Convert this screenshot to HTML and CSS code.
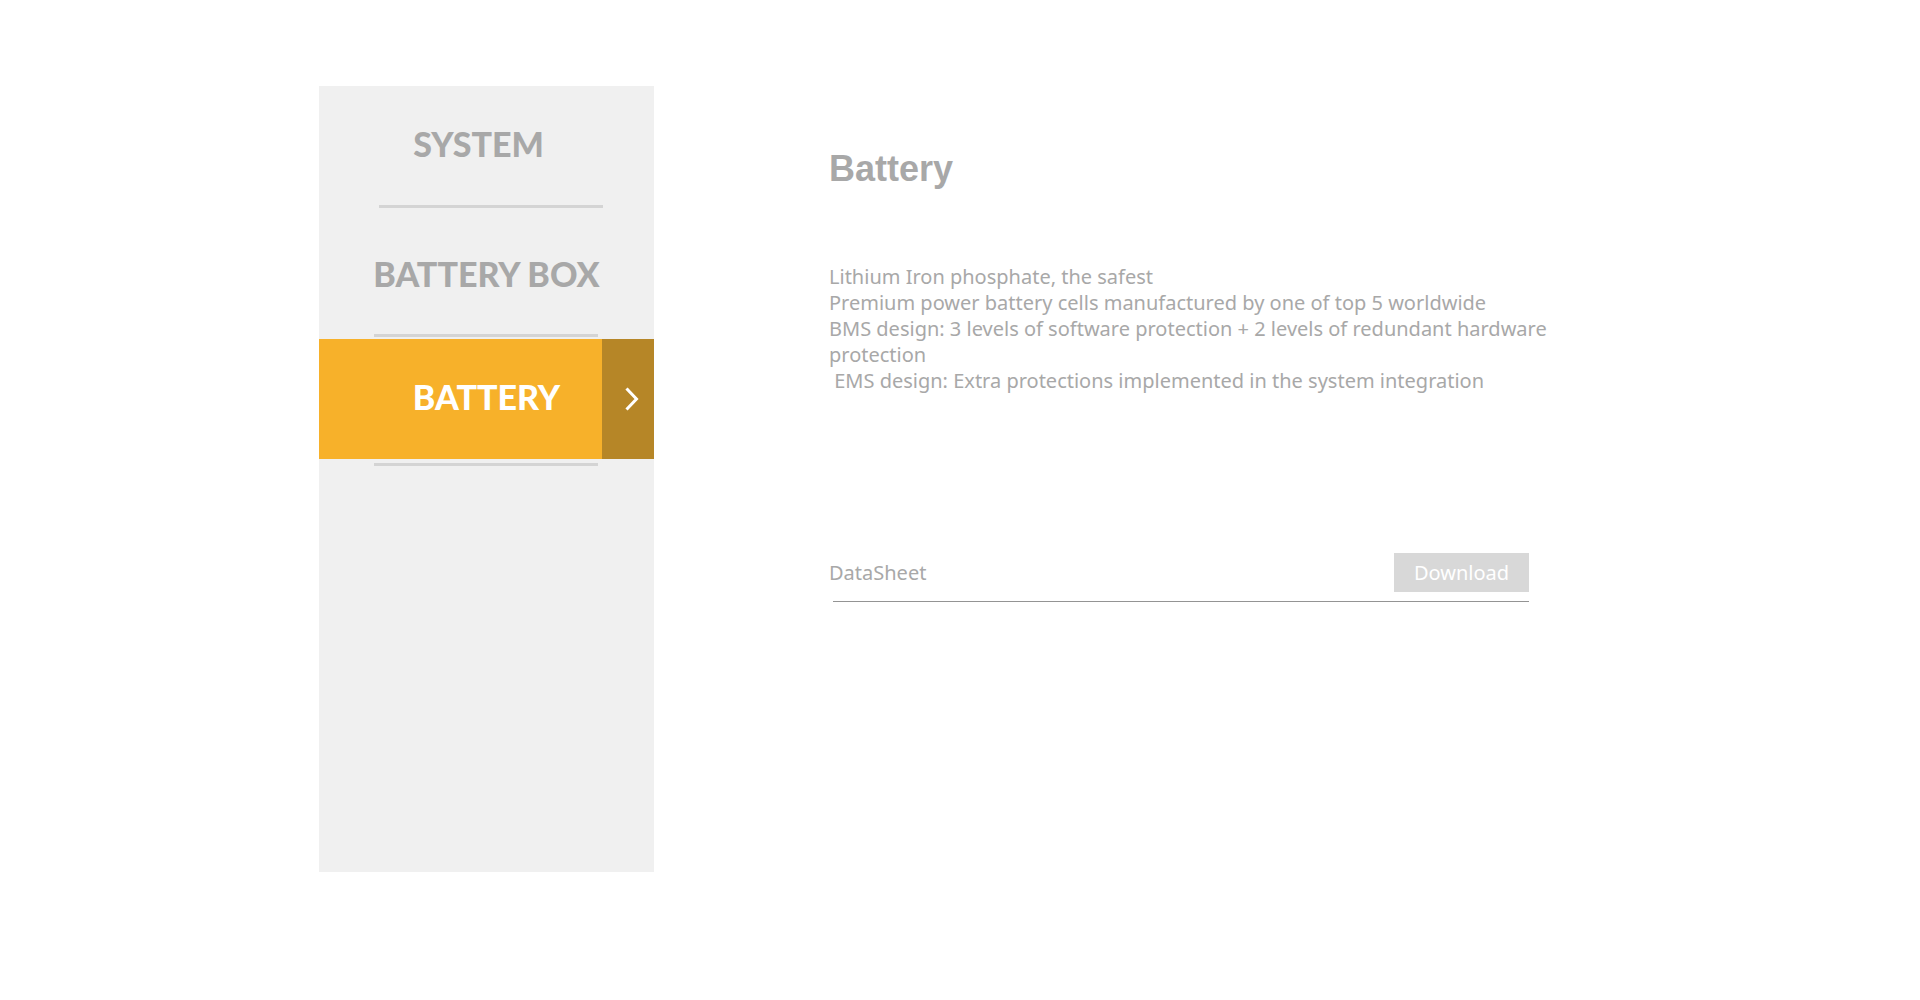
FILE: index.html
```html
<!DOCTYPE html>
<html lang="en">
<head>
<meta charset="utf-8">
<meta name="viewport" content="width=device-width, initial-scale=1">
<title>Battery</title>
<link rel="stylesheet" href="styles.css">
</head>
<body>
<div class="page">
  <nav class="menu" aria-label="Products">
    <a class="menu-item menu-item-system" href="#system">SYSTEM</a>
    <hr class="menu-rule menu-rule-first">
    <a class="menu-item menu-item-box" href="#battery-box">BATTERY BOX</a>
    <hr class="menu-rule">
    <a class="menu-item menu-item-active" href="#battery" aria-current="page">
      <span class="menu-label">BATTERY</span>
      <span class="menu-arrow">
        <svg width="14" height="24" viewBox="0 0 14 24" fill="none" stroke="#fff" stroke-width="3" aria-hidden="true"><path d="M1.5 1.5 L11.5 12 L1.5 22.5"/></svg>
      </span>
    </a>
    <hr class="menu-rule">
  </nav>
  <main class="content">
    <h1 class="title">Battery</h1>
    <p class="description">Lithium Iron phosphate, the safest
Premium power battery cells manufactured by one of top 5 worldwide
BMS design: 3 levels of software protection + 2 levels of redundant hardware protection
 EMS design: Extra protections implemented in the system integration</p>
    <div class="download-row">
      <span id="datasheet">DataSheet</span>
      <button class="download" type="button" aria-describedby="datasheet">Download</button>
    </div>
    <hr class="download-rule">
  </main>
</div>
</body>
</html>
```
FILE: styles.css
```css
* { box-sizing: border-box; }

body {
  margin: 0;
  background: #fff;
  font-family: "Noto Sans", "Open Sans", sans-serif;
  font-size: 20px;
  line-height: 26px;
  color: #a8a8a8;
}

.page {
  display: grid;
  grid-template-columns: 335px minmax(0, 1fr);
  column-gap: 175px;
  max-width: 1282px;
  margin: 0 auto;
  padding: 86px 0 128px;
}

.menu {
  display: flex;
  flex-direction: column;
  min-height: 786px;
  background: #f0f0f0;
}

.menu-item {
  display: flex;
  align-items: center;
  justify-content: center;
  font-family: Lato, "Century Gothic", sans-serif;
  font-size: 34px;
  font-weight: 900;
  line-height: 44px;
  color: #a8a8a8;
  text-decoration: none;
}

.menu-item-system {
  height: 119px;
  padding: 0 16px 4px 0;
}

.menu-item-box {
  height: 126px;
  padding-top: 6px;
}

.menu-item-active {
  height: 120px;
  align-items: stretch;
  background: #f7b12a;
  color: #fff;
}

.menu-label {
  flex: 1;
  display: flex;
  align-items: center;
  justify-content: center;
  padding: 0 0 4px 52px;
}

.menu-arrow {
  display: flex;
  align-items: center;
  justify-content: center;
  width: 52px;
  padding-left: 8px;
  background: #b68627;
}

.menu-rule {
  width: 224px;
  height: 3px;
  margin: 0 0 2px 55px;
  border: 0;
  background: #d4d4d4;
}

.menu-rule-first {
  margin: 0 0 0 60px;
}

.menu-item-active + .menu-rule {
  margin-top: 4px;
}

.content {
  padding-top: 61px;
}

.title {
  margin: 0;
  font-family: "Liberation Sans", Arial, sans-serif;
  font-size: 36px;
  line-height: 44px;
}

.description {
  margin: 73px 0 0;
  white-space: pre-wrap;
}

.download-row {
  display: flex;
  align-items: center;
  justify-content: space-between;
  max-width: 700px;
  margin-top: 159px;
}

.download {
  width: 135px;
  height: 39px;
  border: 0;
  padding: 0;
  background: #d8d8d8;
  color: #fff;
  font: inherit;
}

.download-rule {
  max-width: 696px;
  height: 1px;
  margin: 9px 0 0 4px;
  border: 0;
  background: #949494;
}
```
